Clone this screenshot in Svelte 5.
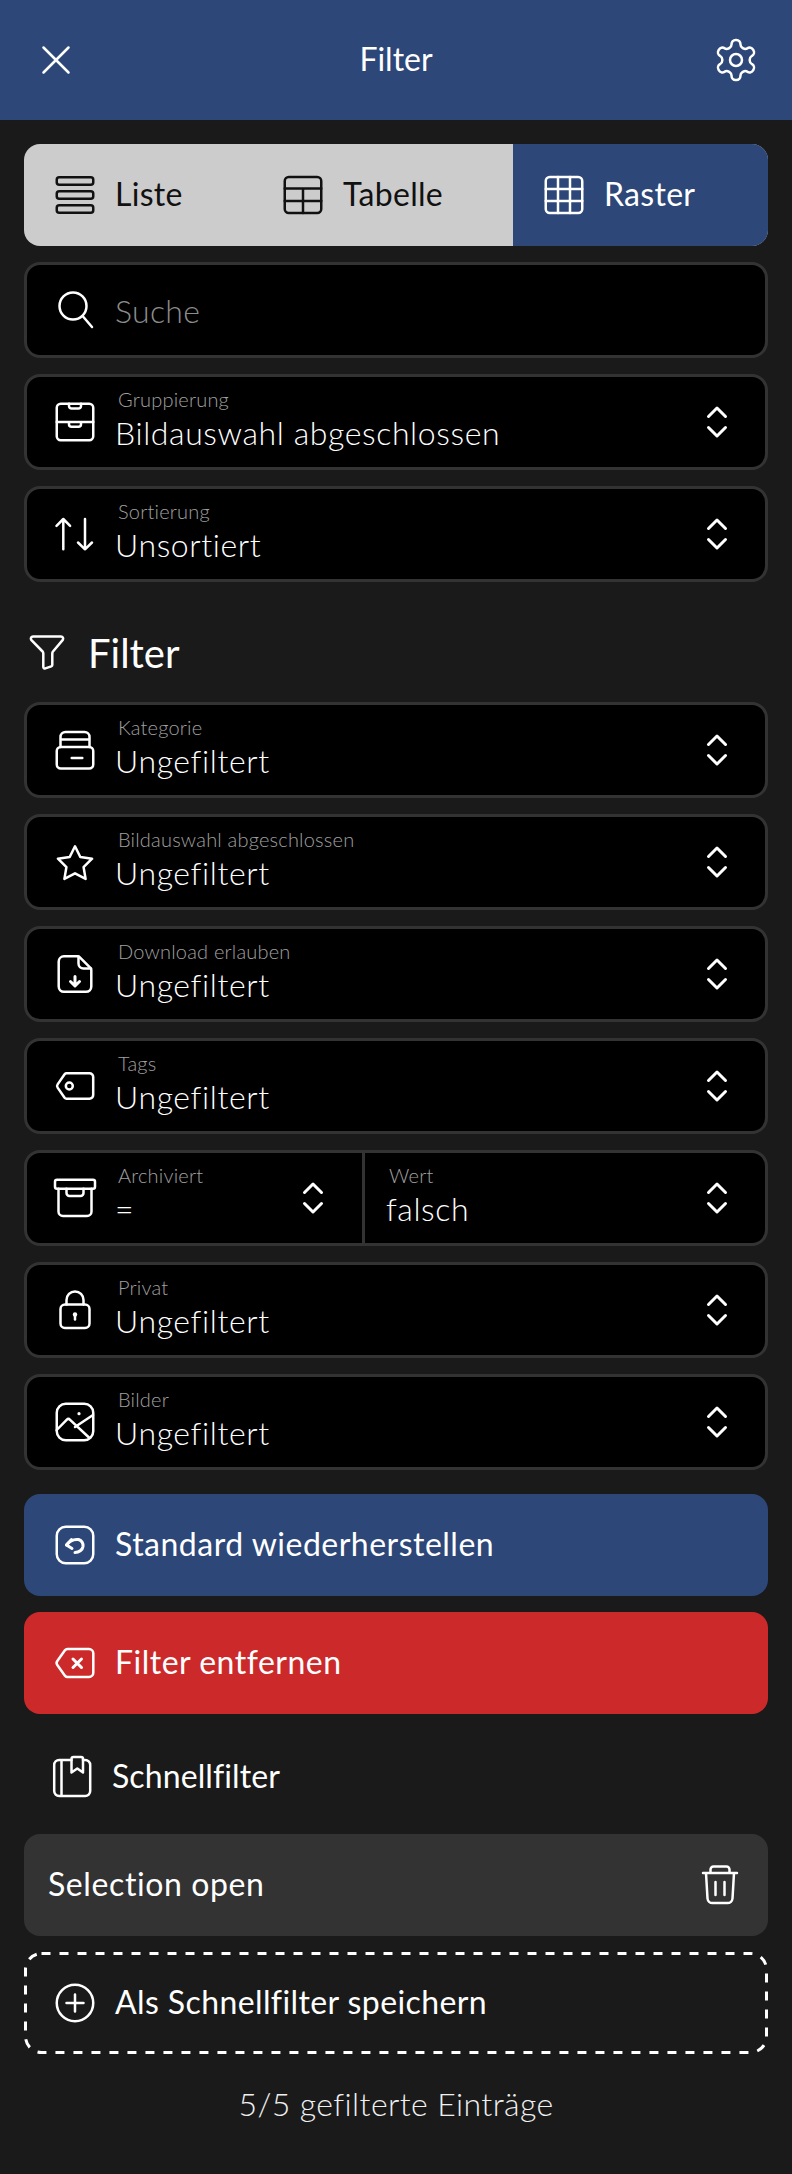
<script>
    const icons = {
        close: '<path d="M11.500 11.500 36.500 36.500M36.500 11.500 11.500 36.500"/>',
        gear: '<g transform="scale(2)" stroke-width="1.25"><path d="M12.22 2h-.44a2 2 0 0 0-2 2v.18a2 2 0 0 1-1 1.73l-.43.25a2 2 0 0 1-2 0l-.15-.08a2 2 0 0 0-2.73.73l-.22.38a2 2 0 0 0 .73 2.73l.15.1a2 2 0 0 1 1 1.72v.51a2 2 0 0 1-1 1.74l-.15.09a2 2 0 0 0-.73 2.73l.22.38a2 2 0 0 0 2.73.73l.15-.08a2 2 0 0 1 2 0l.43.25a2 2 0 0 1 1 1.73V20a2 2 0 0 0 2 2h.44a2 2 0 0 0 2-2v-.18a2 2 0 0 1 1-1.73l.43-.25a2 2 0 0 1 2 0l.15.08a2 2 0 0 0 2.73-.73l.22-.39a2 2 0 0 0-.73-2.73l-.15-.08a2 2 0 0 1-1-1.74v-.5a2 2 0 0 1 1-1.74l.15-.09a2 2 0 0 0 .73-2.73l-.22-.38a2 2 0 0 0-2.73-.73l-.15.08a2 2 0 0 1-2 0l-.43-.25a2 2 0 0 1-1-1.73V4a2 2 0 0 0-2-2z"/><circle cx="12" cy="12" r="3"/></g>',
        list: '<rect x="5.750" y="6.200" width="36.500" height="7.600" rx="2.500"/><rect x="5.750" y="20.200" width="36.500" height="7.600" rx="2.500"/><rect x="5.750" y="34.200" width="36.500" height="7.600" rx="2.500"/>',
        table: '<rect x="5.750" y="6" width="36.500" height="36" rx="4"/><path d="M5.750 17.500h36.500M5.750 30h36.500M24 17.500V42"/>',
        grid: '<rect x="5.750" y="6" width="36.500" height="36" rx="4"/><path d="M5.750 18h36.500M5.750 30h36.500M18 6v36M30 6v36"/>',
        search: '<circle cx="22" cy="20" r="13.500"/><path d="M32 30.500 41 41"/>',
        drawers: '<rect x="5.750" y="5.750" width="36.500" height="36.500" rx="4"/><path d="M5.750 24h36.500M18 5.750V8a2.500 2.500 0 0 0 2.500 2.500h7A2.500 2.500 0 0 0 30 8V5.750M18 24v2.200a2.500 2.500 0 0 0 2.500 2.500h7a2.500 2.500 0 0 0 2.500-2.500V24"/>',
        sort: '<path d="M12.300 39.300V9M5.500 15.800 12.300 9l6.800 6.800M34 9v30.300M27 32.500l7 6.800 7-6.800"/>',
        funnel: '<path d="M6 6.500h28a2.200 2.200 0 0 1 1.800 3.400L26 21.500a3 3 0 0 0-.7 2V35a1.500 1.500 0 0 1-1 1.400l-6 2a1.500 1.500 0 0 1-2-1.400V23.500a3 3 0 0 0-.7-2L4.200 9.900A2.200 2.200 0 0 1 6 6.500z"/>',
        stack: '<rect x="5.750" y="21" width="36.500" height="21.500" rx="4"/><path d="M20.700 32h10.600M9.500 21V11a5 5 0 0 1 5-5h19a5 5 0 0 1 5 5v10M10 13.500h28"/>',
        star: '<path d="M24 8.300 29.300 19 41.100 20.700 32.560 29.080 34.600 40.900 24 35.300 13.400 40.900 15.440 29.080 6.900 20.700 18.700 19z"/>',
        filedown: '<path d="M13 6.250h13.500a3 3 0 0 1 2.100.9l10.800 10.800a3 3 0 0 1 .9 2.100V36.500a5.300 5.300 0 0 1-5.300 5.300H13a5.300 5.300 0 0 1-5.300-5.300V11.500A5.300 5.300 0 0 1 13 6.250z"/><path d="M27.500 6.500v7a5 5 0 0 0 5 5h7.500"/><path d="M24 26.500v9M19.500 31.500l4.500 4.500 4.500-4.500" stroke-width="3"/>',
        tag: '<path d="M38.500 11.300h-23a2.500 2.500 0 0 0-1.900.9L6.600 22.400a2.800 2.800 0 0 0 0 3.200l7 10.200a2.500 2.500 0 0 0 1.900.9h23a3.700 3.700 0 0 0 3.700-3.700V15a3.700 3.700 0 0 0-3.700-3.700z"/><circle cx="18.300" cy="24" r="3.500"/>',
        archive: '<rect x="4" y="5.750" width="40" height="9" rx="2"/><path d="M7.500 14.750V37.500a4.500 4.500 0 0 0 4.500 4.500h24a4.500 4.500 0 0 0 4.500-4.500V14.750M15.500 14.750V19a3 3 0 0 0 3 3h11a3 3 0 0 0 3-3v-4.250"/>',
        lock: '<rect x="9.500" y="18.500" width="29" height="23.500" rx="4.500"/><path d="M15.500 18.500V14a8.500 8.500 0 0 1 17 0v4.500"/><circle cx="24" cy="28.500" r="2.200" fill="currentColor" stroke="none"/><path d="M24 29v4.500"/>',
        image: '<rect x="5.750" y="5.750" width="36.500" height="36.500" rx="9"/><path d="M5.700 32 15.600 21.800a2.500 2.500 0 0 1 3.500 0L38.500 40M24 29 42 17"/><circle cx="28" cy="15.700" r="1.600" fill="currentColor" stroke="none"/>',
        undo: '<rect x="5.750" y="5.750" width="36.500" height="36.500" rx="9"/><path d="M20.500 18.500 15.500 24l5.500 3.500" stroke-width="3"/><path d="M15.500 24c3-4 8-6 12-5.500a6.800 6.800 0 0 1 4.500 7c-.5 3.500-4 6-8 6" stroke-width="3"/>',
        eraser: '<path d="M38 10H16.500a3 3 0 0 0-2.400 1.100L6.300 22a3.400 3.400 0 0 0 0 4l7.800 10.900a3 3 0 0 0 2.400 1.100H38a4.300 4.300 0 0 0 4.300-4.300V14.300A4.300 4.300 0 0 0 38 10z"/><path d="m22 20 8.500 8.500M30.500 20 22 28.500" stroke-width="3"/>',
        book: '<path d="M23.500 7H11.200a5 5 0 0 0-5 5v26a5 5 0 0 0 5 5h26a5 5 0 0 0 5-5V12a5 5 0 0 0-5-5H35M13.500 7v36"/><path d="M23.500 19.500V6a2 2 0 0 1 2-2h7.500a2 2 0 0 1 2 2v13.500l-5.700-4z"/>',
        trash: '<path d="M7 12h34M14.500 12V8.500a3 3 0 0 1 3-3h13a3 3 0 0 1 3 3V12M10 12l1.500 25.500a5 5 0 0 0 5 4.500h15a5 5 0 0 0 5-4.500L38 12M19.500 21v13M28.500 21v13"/>',
        plus: '<circle cx="24" cy="24" r="18.250"/><path d="M24 15.500v17M15.500 24h17"/>',
    };

    const tabs = [
        { label: "Liste", icon: "list" },
        { label: "Tabelle", icon: "table" },
        { label: "Raster", icon: "grid", active: true },
    ];

    const sorting = [
        { label: "Gruppierung", value: "Bildauswahl abgeschlossen", icon: "drawers" },
        { label: "Sortierung", value: "Unsortiert", icon: "sort" },
    ];

    const filters = [
        { label: "Kategorie", value: "Ungefiltert", icon: "stack" },
        { label: "Bildauswahl abgeschlossen", value: "Ungefiltert", icon: "star" },
        { label: "Download erlauben", value: "Ungefiltert", icon: "filedown" },
        { label: "Tags", value: "Ungefiltert", icon: "tag" },
        { label: "Archiviert", value: "=", icon: "archive", second: { label: "Wert", value: "falsch" } },
        { label: "Privat", value: "Ungefiltert", icon: "lock" },
        { label: "Bilder", value: "Ungefiltert", icon: "image" },
    ];
</script>

{#snippet icon(name)}
    <svg class="icon" viewBox="0 0 48 48" width="48" height="48" fill="none" stroke="currentColor" stroke-width="2.5" stroke-linecap="round" stroke-linejoin="round">
        {@html icons[name]}
    </svg>
{/snippet}

{#snippet chevrons()}
    <svg class="chevrons" viewBox="0 0 24 34" width="24" height="34" fill="none" stroke="currentColor" stroke-width="3" stroke-linecap="round" stroke-linejoin="round">
        <path d="M3.500 11.500 12 3l8.500 8.500M3.500 22.500 12 31l8.500-8.500" />
    </svg>
{/snippet}

{#snippet field(label, value)}
    <div class="field">
        <span class="label">{label}</span>
        <span class="value">{value}</span>
    </div>
{/snippet}

{#snippet row(item)}
    <div class="row">
        <div class="cell" class:half={item.second}>
            {@render icon(item.icon)}
            {@render field(item.label, item.value)}
            {@render chevrons()}
        </div>
        {#if item.second}
            <div class="cell second">
                {@render field(item.second.label, item.second.value)}
                {@render chevrons()}
            </div>
        {/if}
    </div>
{/snippet}

<div class="page">
    <header class="topbar">
        <button class="top-btn">{@render icon("close")}</button>
        <h1>Filter</h1>
        <button class="top-btn">{@render icon("gear")}</button>
    </header>

    <main class="content">
        <div class="tabs">
            {#each tabs as tab}
                <div class="tab" class:active={tab.active}>
                    {@render icon(tab.icon)}
                    <span class="txt">{tab.label}</span>
                </div>
            {/each}
        </div>

        <div class="stack">
            <div class="row search">
                {@render icon("search")}
                <span class="placeholder">Suche</span>
            </div>
            {#each sorting as item}
                {@render row(item)}
            {/each}
        </div>

        <h2 class="section">
            {@render icon("funnel")}
            <span class="txt">Filter</span>
        </h2>

        <div class="stack">
            {#each filters as item}
                {@render row(item)}
            {/each}
        </div>

        <div class="actions">
            <button class="action blue">{@render icon("undo")}<span class="txt">Standard wiederherstellen</span></button>
            <button class="action red">{@render icon("eraser")}<span class="txt">Filter entfernen</span></button>
        </div>

        <div class="quick-title">
            {@render icon("book")}
            <span class="txt">Schnellfilter</span>
        </div>

        <div class="saved">
            <span class="txt">Selection open</span>
            {@render icon("trash")}
        </div>

        <button class="save-new">
            <svg class="dashes" viewBox="0 0 744 102" width="744" height="102" fill="none">
                <rect x="1.500" y="1.500" width="741" height="99" rx="16" stroke="#fff" stroke-width="3" stroke-dasharray="9 9" />
            </svg>
            {@render icon("plus")}
            <span class="txt">Als Schnellfilter speichern</span>
        </button>

        <p class="count">5/5 gefilterte Einträge</p>
    </main>
</div>

<style>
    :global(body) {
        background: #1a1a1a;
    }

    .page {
        width: 792px;
        height: 2174px;
        background: #1a1a1a;
        color: #fff;
        font-family: Lato, "Open Sans", sans-serif;
    }

    .icon {
        flex: none;
        display: block;
    }

    .txt {
        margin-bottom: 3px;
    }

    button {
        font: inherit;
        color: inherit;
        border: none;
        background: none;
        padding: 0;
    }

    .topbar {
        height: 120px;
        background: #2c4778;
        display: flex;
        align-items: center;
        justify-content: space-between;
        padding: 0 32px;
    }

    .topbar h1 {
        margin: 0 0 3px;
        font-size: 32px;
        font-weight: 400;
    }

    .content {
        padding: 24px 24px 0;
    }

    .tabs {
        height: 102px;
        display: flex;
        border-radius: 16px;
        overflow: hidden;
        background: #ccc;
        color: #111;
        font-size: 32px;
        letter-spacing: 0.3px;
    }

    .tab {
        flex: 0 0 228px;
        box-sizing: border-box;
        display: flex;
        align-items: center;
        gap: 16px;
        padding-left: 27px;
    }

    .tab:nth-child(2) {
        flex-basis: 261px;
    }

    .tab.active {
        flex: 1;
        background: #2c4778;
        color: #fff;
    }

    .stack {
        display: flex;
        flex-direction: column;
        gap: 16px;
    }

    .tabs + .stack {
        margin-top: 16px;
    }

    .row {
        height: 96px;
        box-sizing: border-box;
        display: flex;
        align-items: center;
        background: #000;
        border: 3px solid #333;
        border-radius: 16px;
    }

    .search {
        padding-left: 24px;
        gap: 16px;
    }

    .placeholder {
        font-size: 32px;
        font-weight: 300;
        letter-spacing: 0.3px;
        color: #8c8c8c;
    }

    .cell {
        flex: 1;
        height: 100%;
        display: flex;
        align-items: center;
        padding: 0 36px 0 24px;
        gap: 16px;
    }

    .cell.half {
        flex: none;
        width: 335px;
        box-sizing: border-box;
        padding-right: 37px;
    }

    .cell.second {
        border-left: 3px solid #333;
        padding-left: 21px;
    }

    .field {
        flex: 1;
        display: flex;
        flex-direction: column;
        min-width: 0;
        margin-top: -6px;
    }

    .label {
        font-size: 20px;
        font-weight: 300;
        line-height: 24px;
        margin-left: 3px;
        letter-spacing: 0.2px;
        color: #a0a0a0;
    }

    .value {
        font-size: 32px;
        font-weight: 300;
        line-height: 38px;
        margin-top: 3px;
        letter-spacing: 0.6px;
    }

    .section {
        display: flex;
        align-items: center;
        gap: 13px;
        height: 96px;
        margin: 24px 0 0;
        font-size: 40px;
        font-weight: 400;
    }

    .section .icon {
        margin-left: 3px;
    }

    .actions {
        margin-top: 24px;
        display: flex;
        flex-direction: column;
        gap: 16px;
    }

    .action {
        height: 102px;
        display: flex;
        align-items: center;
        gap: 16px;
        padding-left: 27px;
        border-radius: 16px;
        font-size: 32px;
        letter-spacing: 0.5px;
        text-align: left;
    }

    .blue {
        background: #2c4778;
    }

    .red {
        background: #cc2a2a;
    }

    .quick-title {
        height: 88px;
        margin-top: 19px;
        display: flex;
        align-items: center;
        gap: 16px;
        padding-left: 24px;
        font-size: 32px;
        letter-spacing: 0.1px;
    }

    .saved {
        height: 102px;
        margin-top: 13px;
        display: flex;
        align-items: center;
        justify-content: space-between;
        padding: 0 24px;
        border-radius: 16px;
        background: #333;
        font-size: 32px;
        letter-spacing: 0.6px;
    }

    .save-new {
        position: relative;
        width: 100%;
        height: 102px;
        margin-top: 16px;
        display: flex;
        align-items: center;
        gap: 16px;
        padding-left: 27px;
        font-size: 32px;
        letter-spacing: 0.4px;
    }

    .dashes {
        position: absolute;
        left: 0;
        top: 0;
    }

    .count {
        margin: 30px 0 0;
        text-align: center;
        font-size: 32px;
        font-weight: 300;
        line-height: 40px;
        letter-spacing: 0.4px;
        color: #f0f0f0;
    }
</style>
